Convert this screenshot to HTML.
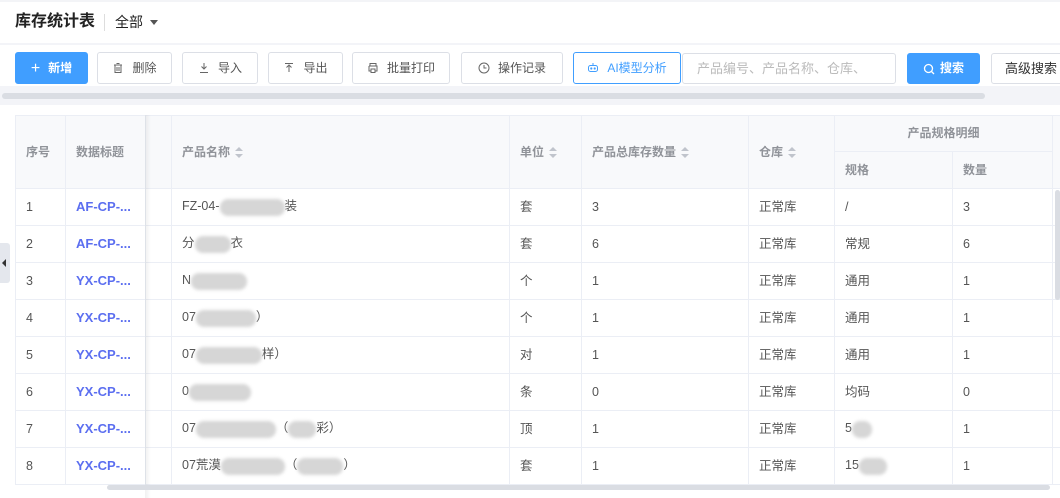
<!DOCTYPE html>
<html><head><meta charset="utf-8"><style>
*{box-sizing:border-box;margin:0;padding:0}
body{width:1060px;height:498px;overflow:hidden;background:#fff;font-family:"Liberation Sans","Noto Sans CJK SC",sans-serif;font-size:12px;color:#333;position:relative;line-height:17px}
.a{position:absolute}
.btn{position:absolute;top:52px;height:32px;border:1px solid #dcdfe6;border-radius:3px;background:#fff;color:#555;font-size:12px;display:flex;align-items:center;justify-content:center;gap:8px}
.btn svg{width:12px;height:12px}
table{position:absolute;left:15px;top:115px;width:1057px;border-collapse:collapse;table-layout:fixed}
td,th{border:1px solid #ebeef5;height:37px;padding:0 10px;text-align:left;font-weight:normal;white-space:nowrap;overflow:hidden;line-height:17px;vertical-align:middle}
td::after{content:"中";visibility:hidden;display:inline-block;width:0;font-weight:normal;font-size:12.5px}
th{background:#f8f9fb;color:#909399;font-weight:bold;font-size:12px}
td{color:#555;font-size:12.5px}
.lnk{color:#5b6ef0;font-weight:bold;font-size:13px}
.so{display:inline-block;vertical-align:middle;margin-left:5px;width:8px;height:11px;position:relative}
.so:before,.so:after{content:"";position:absolute;left:0;border-left:4px solid transparent;border-right:4px solid transparent}
.so:before{top:0;border-bottom:4px solid #c0c4cc}
.so:after{bottom:0;border-top:4px solid #c0c4cc}
.blur{display:inline-block;vertical-align:middle;height:17px;background:#d6d6d6;border-radius:8px;filter:blur(1.5px)}
</style></head><body>
<div class="a" style="left:0;top:0;width:1060px;height:2px;background:#f3f4f7"></div>
<div class="a" style="left:15px;top:13px;font-size:16px;font-weight:bold;color:#222">库存统计表</div>
<div class="a" style="left:104px;top:14px;width:1px;height:17px;background:#ddd"></div>
<div class="a" style="left:115px;top:14px;font-size:14px;color:#222">全部</div>
<div class="a" style="left:150px;top:20px;border-left:4px solid transparent;border-right:4px solid transparent;border-top:5px solid #555"></div>
<div class="a" style="left:0;top:43px;width:1060px;height:2px;background:#f3f4f8"></div>

<div class="btn" style="left:15px;width:73px;background:#409eff;border-color:#409eff;color:#fff;font-weight:bold"><span style="font-size:16px;font-weight:normal">+</span>新增</div>
<div class="btn" style="left:97px;width:75px"><svg viewBox="0 0 12 12" fill="none" stroke="#666"><path d="M2 3h8M4.5 1.5h3M3 3v7.5h6V3M5 5v4M7 5v4"/></svg>删除</div>
<div class="btn" style="left:182px;width:76px"><svg viewBox="0 0 12 12" fill="none" stroke="#666"><path d="M6 1v6M3.5 4.5L6 7l2.5-2.5M2 10.5h8"/></svg>导入</div>
<div class="btn" style="left:268px;width:75px"><svg viewBox="0 0 12 12" fill="none" stroke="#666"><path d="M6 10V4M3.5 5.5L6 3l2.5 2.5M2 1.5h8"/></svg>导出</div>
<div class="btn" style="left:352px;width:98px"><svg viewBox="0 0 12 12" fill="none" stroke="#666"><path d="M3 4V1.5h6V4M2 4h8v5H8M4 9H2V4M4 7h4v3.5H4z"/></svg>批量打印</div>
<div class="btn" style="left:461px;width:102px"><svg viewBox="0 0 12 12" fill="none" stroke="#666"><circle cx="6" cy="6" r="5"/><path d="M6 3v3h2.5"/></svg>操作记录</div>
<div class="btn" style="left:573px;width:108px;border-color:#409eff;color:#409eff"><svg viewBox="0 0 12 12" fill="none" stroke="#409eff"><rect x="1.5" y="3.5" width="9" height="6" rx="2"/><path d="M6 1v2.5"/><circle cx="4.3" cy="6.5" r=".6" fill="#409eff"/><circle cx="7.7" cy="6.5" r=".6" fill="#409eff"/></svg>AI模型分析</div>
<div class="btn" style="left:682px;width:214px;justify-content:flex-start;padding-left:14px;color:#bbb;font-size:13px;top:53px;height:31px">产品编号、产品名称、仓库、</div>
<div class="btn" style="left:907px;width:73px;background:#409eff;border-color:#409eff;color:#fff;font-weight:bold;top:53px;height:31px;gap:5px"><svg viewBox="0 0 12 12" fill="none" stroke="#fff" stroke-width="1.3"><circle cx="5.5" cy="5.5" r="4"/><path d="M8.5 8.5L11 11"/></svg>搜索</div>
<div class="btn" style="left:991px;width:80px;color:#333;font-size:13px;top:53px;height:31px">高级搜索</div>

<div class="a" style="left:0;top:86px;width:1060px;height:19px;background:#f3f4f8"></div>
<div class="a" style="left:2px;top:93px;width:983px;height:6px;background:#dadde3;border-radius:3px"></div>
<div class="a" style="left:0;top:105px;width:1060px;height:393px;background:#fff"></div>
<div class="a" style="left:0;top:243px;width:10px;height:40px;background:#e4e7ed;border-radius:0 3px 3px 0"></div>
<div class="a" style="left:2px;top:259px;border-top:4px solid transparent;border-bottom:4px solid transparent;border-right:4px solid #333"></div>

<table>
<colgroup><col style="width:50px"><col style="width:80px"><col style="width:26px"><col style="width:338px"><col style="width:72px"><col style="width:167px"><col style="width:86px"><col style="width:118px"><col style="width:100px"><col style="width:20px"></colgroup>
<tr><th rowspan="2" style="height:72px">序号</th><th rowspan="2">数据标题</th><th rowspan="2"></th><th rowspan="2">产品名称<span class="so"></span></th><th rowspan="2">单位<span class="so"></span></th><th rowspan="2">产品总库存数量<span class="so"></span></th><th rowspan="2">仓库<span class="so"></span></th><th colspan="2" style="text-align:center;height:36px">产品规格明细</th><th rowspan="2"></th></tr>
<tr><th style="height:36px">规格</th><th>数量</th></tr>
<tr><td>1</td><td class="lnk">AF-CP-...</td><td></td><td>FZ-04-<span class="blur" style="width:65px"></span>装</td><td>套</td><td>3</td><td>正常库</td><td>/</td><td>3</td><td></td></tr>
<tr><td>2</td><td class="lnk">AF-CP-...</td><td></td><td>分<span class="blur" style="width:36px"></span>衣</td><td>套</td><td>6</td><td>正常库</td><td>常规</td><td>6</td><td></td></tr>
<tr><td>3</td><td class="lnk">YX-CP-...</td><td></td><td>N<span class="blur" style="width:56px"></span></td><td>个</td><td>1</td><td>正常库</td><td>通用</td><td>1</td><td></td></tr>
<tr><td>4</td><td class="lnk">YX-CP-...</td><td></td><td>07<span class="blur" style="width:60px"></span>）</td><td>个</td><td>1</td><td>正常库</td><td>通用</td><td>1</td><td></td></tr>
<tr><td>5</td><td class="lnk">YX-CP-...</td><td></td><td>07<span class="blur" style="width:66px"></span>样）</td><td>对</td><td>1</td><td>正常库</td><td>通用</td><td>1</td><td></td></tr>
<tr><td>6</td><td class="lnk">YX-CP-...</td><td></td><td>0<span class="blur" style="width:62px"></span></td><td>条</td><td>0</td><td>正常库</td><td>均码</td><td>0</td><td></td></tr>
<tr><td>7</td><td class="lnk">YX-CP-...</td><td></td><td>07<span class="blur" style="width:80px"></span>（<span class="blur" style="width:28px"></span>彩）</td><td>顶</td><td>1</td><td>正常库</td><td>5<span class="blur" style="width:20px"></span></td><td>1</td><td></td></tr>
<tr><td>8</td><td class="lnk">YX-CP-...</td><td></td><td>07荒漠<span class="blur" style="width:64px"></span>（<span class="blur" style="width:46px"></span>）</td><td>套</td><td>1</td><td>正常库</td><td>15<span class="blur" style="width:28px"></span></td><td>1</td><td></td></tr>
</table>
<div class="a" style="left:145px;top:115px;width:6px;height:383px;background:linear-gradient(90deg,rgba(0,0,0,.06),rgba(0,0,0,0))"></div>
<div class="a" style="left:1055px;top:190px;width:5px;height:110px;background:#dadde3;border-radius:3px"></div>
<div class="a" style="left:107px;top:485px;width:943px;height:5px;background:#dadde3;border-radius:3px"></div>
</body></html>
